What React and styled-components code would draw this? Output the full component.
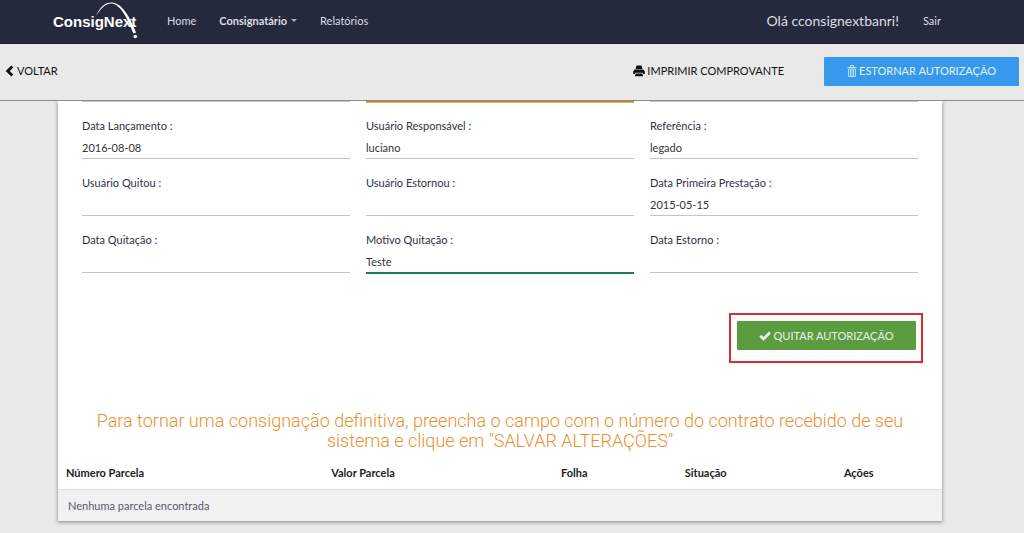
import React from 'react';
import styled, { createGlobalStyle, css } from 'styled-components';

const GlobalStyle = createGlobalStyle`
  * {
    box-sizing: border-box;
  }

  body {
    margin: 0;
    background-color: #e9e9e9;
    color: #2f3242;
    font-family: Lato, 'Liberation Sans', sans-serif;
    font-size: 11px;
    line-height: 16px;
  }
`;

const StyledNav = styled.nav`
  display: flex;
  align-items: center;
  height: 44px;
  padding: 0 83px 2px 53px;
  background-color: #25293d;
  border-bottom: 1px solid #191c2b;
`;

const StyledLogo = styled.a`
  display: flex;
  margin-right: 26px;
`;

const StyledNavLink = styled.a`
  display: flex;
  align-items: center;
  margin-right: 23px;
  color: #dcdde4;
  font-weight: ${props => (props.$active ? 700 : 400)};
  text-decoration: none;
`;

const StyledCaret = styled.span`
  margin-left: 4px;
  border: 3px solid transparent;
  border-top-color: #a9abb8;
  border-bottom: 0;
`;

const StyledUser = styled.div`
  display: flex;
  align-items: center;
  gap: 24px;
  margin-left: auto;
`;

const StyledGreeting = styled.span`
  color: #dcdde4;
  font-size: 14px;
`;

const StyledSignOut = styled(StyledNavLink)`
  margin-right: 0;
`;

const StyledToolbar = styled.header`
  display: flex;
  align-items: center;
  justify-content: space-between;
  height: 57px;
  padding: 0 5px 2px;
  background-color: #e9e9e9;
  border-bottom: 1px solid #8c8c8c;
`;

const StyledActions = styled.div`
  display: flex;
  align-items: center;
  gap: 40px;
`;

const buttonBase = css`
  display: flex;
  align-items: center;
  justify-content: center;
  gap: 2px;
  border: 0;
  font-family: inherit;
  font-size: 11px;
  line-height: 16px;
  text-transform: uppercase;
  cursor: pointer;
`;

const StyledTextButton = styled.button`
  ${buttonBase}
  padding: 0;
  background: none;
  color: #111;
`;

const StyledSolidButton = styled.button`
  ${buttonBase}
  width: ${props => props.$width}px;
  height: 29px;
  padding: 0;
  border-radius: 1px;
  background-color: ${props => props.$color};
  color: #e4f3e8;
`;

const StyledPage = styled.main`
  padding: 0 82px 12px 58px;
`;

const StyledCard = styled.section`
  background-color: #fff;
  box-shadow: 0 1px 4px rgba(0, 0, 0, 0.45);
  clip-path: inset(0 -8px -8px -8px);
`;

const StyledFields = styled.div`
  display: grid;
  grid-template-columns: repeat(3, 1fr);
  gap: 16px;
  padding: 0 24px;
`;

const StyledRule = styled.div`
  height: 1px;
  background-color: ${props => (props.$warning ? '#c9822f' : '#c4c4c4')};
  box-shadow: ${props => (props.$warning ? '0 1px 0 #eba75c' : 'none')};
`;

const StyledField = styled.div`
  display: flex;
  flex-direction: column;
  gap: 4px;
`;

const StyledInput = styled.input`
  width: 100%;
  height: 21px;
  padding: 0 0 1px;
  border: 0;
  border-bottom: 1px solid ${props => (props.$valid ? '#1f7d5c' : '#c4c4c4')};
  border-radius: 0;
  outline: 0;
  background: none;
  box-shadow: ${props => (props.$valid ? '0 1px 0 #1f7d5c' : 'none')};
  color: #333;
  font-family: inherit;
  font-size: 11px;
`;

const StyledSubmit = styled.div`
  display: flex;
  justify-content: flex-end;
  padding: 40px 19px 48px;
`;

const StyledHighlight = styled.div`
  padding: 6px 5px 11px 6px;
  border: 2px solid #dc2a30;
`;

const StyledNotice = styled.h2`
  margin: 0;
  padding: 0 24px 11px;
  color: #e8902f;
  font-family: 'Helvetica Neue', Roboto, 'Liberation Sans', sans-serif;
  font-size: 18px;
  font-weight: 300;
  line-height: 20px;
  text-align: center;
`;

const StyledTable = styled.table`
  width: 100%;
  border-collapse: collapse;
  table-layout: fixed;
`;

const StyledHeadCell = styled.th`
  width: ${props => props.$width};
  height: 27px;
  padding: 3px 8px 8px;
  color: #222;
  text-align: left;
`;

const StyledCell = styled.td`
  height: 31px;
  padding: 2px 10px 0;
  border-top: 1px solid #ddd;
  background-color: #f1f1f1;
  color: #555a6b;
`;

const fields = [
  { id: 'dataLancamento', label: 'Data Lançamento :', value: '2016-08-08' },
  { id: 'usuarioResponsavel', label: 'Usuário Responsável :', value: 'luciano' },
  { id: 'referencia', label: 'Referência :', value: 'legado' },
  { id: 'usuarioQuitou', label: 'Usuário Quitou :', value: '' },
  { id: 'usuarioEstornou', label: 'Usuário Estornou :', value: '' },
  { id: 'dataPrimeiraPrestacao', label: 'Data Primeira Prestação :', value: '2015-05-15' },
  { id: 'dataQuitacao', label: 'Data Quitação :', value: '' },
  { id: 'motivoQuitacao', label: 'Motivo Quitação :', value: 'Teste', valid: true },
  { id: 'dataEstorno', label: 'Data Estorno :', value: '' },
];

const columns = [
  { title: 'Número Parcela', width: '30%' },
  { title: 'Valor Parcela', width: '26%' },
  { title: 'Folha', width: '14%' },
  { title: 'Situação', width: '18%' },
  { title: 'Ações', width: '12%' },
];

const Logo = () => (
  <svg width="88" height="40" viewBox="0 0 88 40" role="img" aria-label="ConsigNext">
    <text x="0" y="26" fill="#fff" fontFamily="Liberation Sans, Arial, sans-serif" fontSize="15" fontWeight="700">
      ConsigNext
    </text>
    <path d="M43 15C47 6 52 1.300 59 1.600C69 2.300 77 16 83 31.500L80.500 32.500C74 17 68 4 59 2.500C53 1.800 48 7 43 15Z" fill="#fff" />
    <circle cx="82.300" cy="35.500" r="1.800" fill="#fff" />
  </svg>
);

const BackIcon = () => (
  <svg width="10" height="12" viewBox="0 0 10 12" fill="none" stroke="currentColor" strokeWidth="2.800" aria-hidden="true">
    <path d="M7.300 1.400L2.700 6L7.300 10.600" />
  </svg>
);

const PrintIcon = () => (
  <svg width="12" height="12" viewBox="0 0 12 12" fill="currentColor" aria-hidden="true">
    <path d="M3.500 0.500h5l1 3.500h-7z" />
    <path d="M1.500 4.600h9l1.300 2v2.400h-1.600l-0.500-1.200h-7.400l-0.500 1.200h-1.600v-2.400z" />
    <path d="M2.700 8.500h6.600l0.800 2.700h-8.200z" />
  </svg>
);

const TrashIcon = () => (
  <svg width="10" height="12" viewBox="0 0 10 12" fill="none" stroke="#bfe6f5" aria-hidden="true">
    <path d="M0.500 2.500h9M3.500 2v-1.500h3v1.500" />
    <path d="M1.500 4v7.500h7v-7.500zM3.500 4v7M5 4v7M6.500 4v7" strokeWidth="0.900" />
  </svg>
);

const CheckIcon = () => (
  <svg width="12" height="12" viewBox="0 0 12 12" fill="none" stroke="currentColor" strokeWidth="2.800" aria-hidden="true">
    <path d="M1.300 5.700L4.500 8.900L10.900 2.500" />
  </svg>
);

const App = () => {
  return (
    <>
      <GlobalStyle />
      <StyledNav>
        <StyledLogo href="#"><Logo /></StyledLogo>
        <StyledNavLink href="#">Home</StyledNavLink>
        <StyledNavLink href="#" $active>Consignatário<StyledCaret /></StyledNavLink>
        <StyledNavLink href="#">Relatórios</StyledNavLink>
        <StyledUser>
          <StyledGreeting>Olá cconsignextbanri!</StyledGreeting>
          <StyledSignOut href="#">Sair</StyledSignOut>
        </StyledUser>
      </StyledNav>
      <StyledToolbar>
        <StyledTextButton type="button"><BackIcon />Voltar</StyledTextButton>
        <StyledActions>
          <StyledTextButton type="button"><PrintIcon />Imprimir comprovante</StyledTextButton>
          <StyledSolidButton type="button" $width={195} $color="#3799ec">
            <TrashIcon />Estornar autorização
          </StyledSolidButton>
        </StyledActions>
      </StyledToolbar>
      <StyledPage>
        <StyledCard>
          <StyledFields>
            <StyledRule />
            <StyledRule $warning />
            <StyledRule />
            {fields.map(field => (
              <StyledField key={field.id}>
                <label htmlFor={field.id}>{field.label}</label>
                <StyledInput id={field.id} defaultValue={field.value} $valid={field.valid} />
              </StyledField>
            ))}
          </StyledFields>
          <StyledSubmit>
            <StyledHighlight>
              <StyledSolidButton type="button" $width={179} $color="#5c9c41">
                <CheckIcon />Quitar autorização
              </StyledSolidButton>
            </StyledHighlight>
          </StyledSubmit>
          <StyledNotice>
            Para tornar uma consignação definitiva, preencha o campo com o número do contrato recebido de seu
            sistema e clique em "SALVAR ALTERAÇÕES"
          </StyledNotice>
          <StyledTable>
            <thead>
              <tr>
                {columns.map(column => (
                  <StyledHeadCell key={column.title} $width={column.width}>{column.title}</StyledHeadCell>
                ))}
              </tr>
            </thead>
            <tbody>
              <tr>
                <StyledCell colSpan={columns.length}>Nenhuma parcela encontrada</StyledCell>
              </tr>
            </tbody>
          </StyledTable>
        </StyledCard>
      </StyledPage>
    </>
  );
}

export default App;
